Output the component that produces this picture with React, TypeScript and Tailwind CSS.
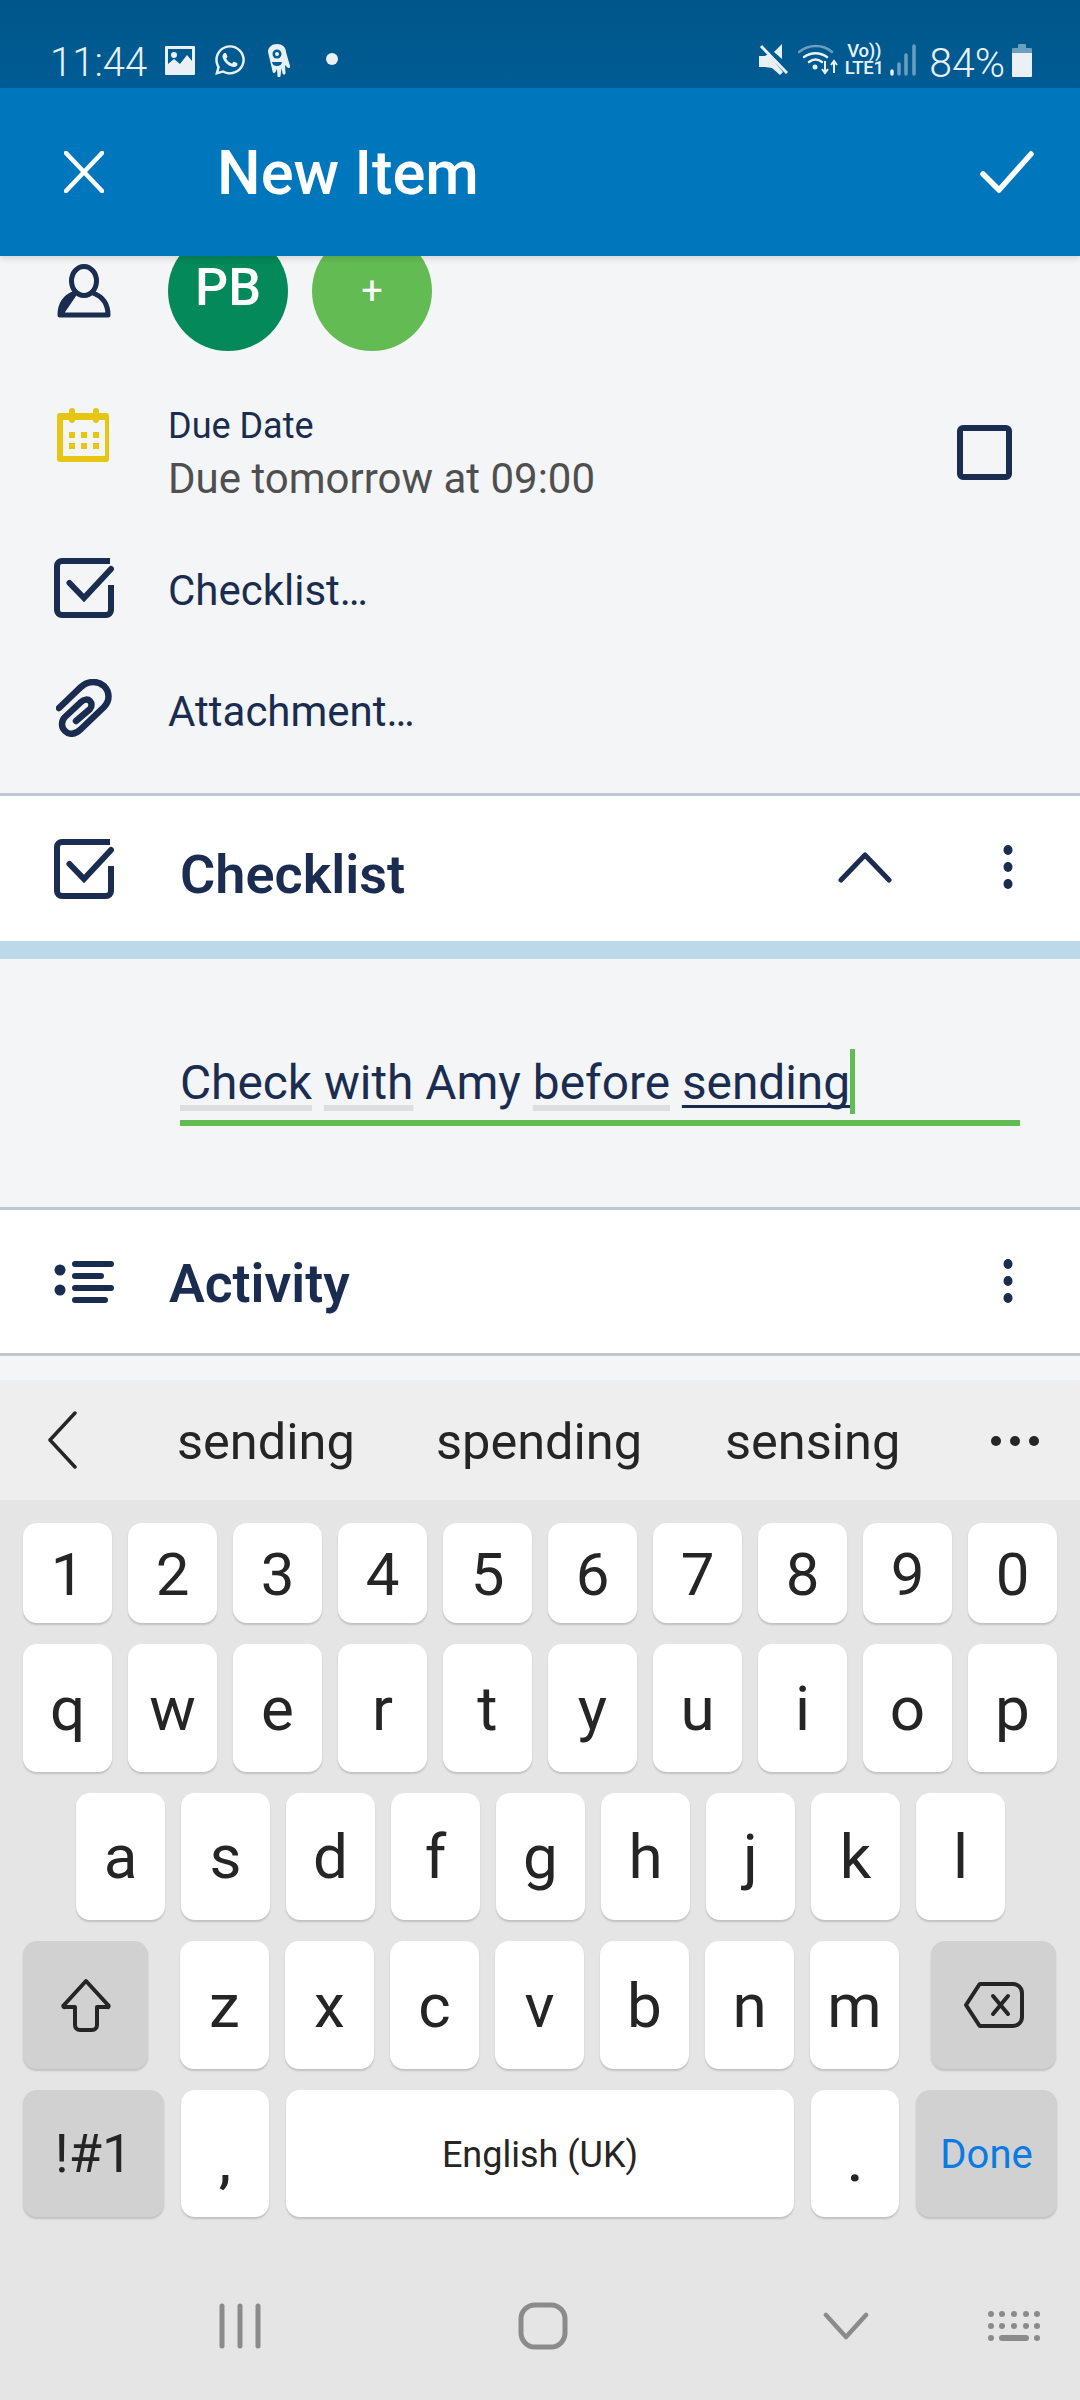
import { FaWhatsapp } from 'react-icons/fa';

const ROW_1 = ['1', '2', '3', '4', '5', '6', '7', '8', '9', '0'];
const ROW_2 = ['q', 'w', 'e', 'r', 't', 'y', 'u', 'i', 'o', 'p'];
const ROW_3 = ['a', 's', 'd', 'f', 'g', 'h', 'j', 'k', 'l'];
const ROW_4 = ['z', 'x', 'c', 'v', 'b', 'n', 'm'];

const NAVY = '#1a2d50';

const Key = ({ label, className = '' }: { label: React.ReactNode; className?: string }) => (
  <div
    className={`flex items-center justify-center rounded-[14px] bg-white shadow-[0_2px_2px_rgba(0,0,0,0.16)] ${className}`}
  >
    {label}
  </div>
);

const GrayKey = ({ label, className = '' }: { label: React.ReactNode; className?: string }) => (
  <div
    className={`flex items-center justify-center rounded-[14px] bg-[#d1d1d1] shadow-[0_2px_2px_rgba(0,0,0,0.16)] ${className}`}
  >
    {label}
  </div>
);

const CheckBoxIcon = () => (
  <svg width="60" height="60" viewBox="0 0 60 60" fill="none" stroke={NAVY} strokeWidth="6">
    <path d="M56 3H8a5 5 0 0 0-5 5v44a5 5 0 0 0 5 5h44a5 5 0 0 0 5-5V27" />
    <path d="M15.5 25 30 40 57 11" strokeLinecap="round" />
  </svg>
);

const Dots = () => (
  <svg width="12" height="46" viewBox="0 0 12 46" fill={NAVY}>
    <ellipse cx="6" cy="6" rx="4.5" ry="5" />
    <ellipse cx="6" cy="23" rx="4.5" ry="5" />
    <ellipse cx="6" cy="40" rx="4.5" ry="5" />
  </svg>
);

const StatusBar = () => (
  <div className="flex h-[88px] shrink-0 items-start bg-gradient-to-b from-[#00568a] to-[#005c94] pl-[50px] pt-[38px] text-[#e9f1f6]">
    <span className="mt-[2px] text-[40px] font-light leading-[46px]">11:44</span>
    <svg className="ml-[18px] mt-[8px]" width="30" height="29" viewBox="0 0 30 29">
      <path
        fill="#e9f1f6"
        fillRule="evenodd"
        d="M1 0h28a1 1 0 0 1 1 1v27a1 1 0 0 1-1 1H1a1 1 0 0 1-1-1V1a1 1 0 0 1 1-1Zm2 3v15l6-5 6 5 7-9 5 6V3H3Z"
      />
      <circle cx="9" cy="9" r="3" fill="#e9f1f6" />
    </svg>
    <FaWhatsapp className="ml-[18px] mt-[5px]" size={34} />
    <svg className="ml-[19px] mt-[6px]" width="25" height="33" viewBox="0 0 25 33">
      <path
        fill="#e9f1f6"
        d="M2 8c0-5 4-8 9-8s9 3 9 8l4 14c.4 2-2 3-3 1l-2-2 .5 8c0 2-3 2-3 0l-1-5-1 8c-.2 2-3 2-3 0l-.5-7-1.500 3c-1 2-3 1-3-1L2 8Z"
      />
      <circle cx="11" cy="10" r="4.500" fill="#005c94" />
      <circle cx="11" cy="10" r="2" fill="#e9f1f6" />
      <path fill="#005c94" d="M6 18h10c-.5 3-2.500 4-5 4s-4.500-1-5-4Z" />
    </svg>
    <span className="ml-[35px] mt-[15px] size-[12px] rounded-full bg-[#e9f1f6]" />

    <div className="ml-auto flex items-start pr-[48px]">
      <svg className="mt-[6px]" width="30" height="32" viewBox="0 0 30 32">
        <path fill="#e9f1f6" d="M0 12h6l3-2 15 18-3 3-8-7-7-1H0V12Zm15-4 8-8v15l-8-7Z" />
        <path stroke="#e9f1f6" strokeWidth="3" d="M2 2l26 27" />
        <path stroke="#005c94" strokeWidth="2" d="M5 1l25 26" />
      </svg>
      <svg className="ml-[9px] mt-[6px]" width="42" height="32" viewBox="0 0 42 32" fill="none">
        <path stroke="#6b9fc0" strokeWidth="2.500" strokeLinecap="round" d="M1 8c10-8 24-8 33 0" />
        <path stroke="#e9f1f6" strokeWidth="2.500" strokeLinecap="round" d="M6 13c7-5 16-5 23 0M11 18c4-3 9-3 13 0" />
        <circle cx="17" cy="23" r="2.500" fill="#e9f1f6" />
        <path stroke="#e9f1f6" strokeWidth="2" d="M27 17v12m-3-4 3 4 3-4M36 29V17m-3 4 3-4 3 4" />
      </svg>
      <p className="ml-[4px] mt-[5px] w-[40px] whitespace-nowrap text-center text-[18.500px] font-medium leading-[17px] tracking-[-0.3px] text-[#e9f1f6]">
        Vo))
        <br />
        LTE1
      </p>
      <svg className="ml-[5px] mt-[5px]" width="28" height="34" viewBox="0 0 28 34" strokeWidth="3.500" strokeLinecap="round">
        <path stroke="#e9f1f6" d="M3 28v3" />
        <path stroke="#6b9fc0" d="M10 21v10M17 12v19M25 3v28" />
      </svg>
      <span className="ml-[12px] mt-[2px] text-[41px] font-light leading-[46px]">84%</span>
      <svg className="ml-[7px] mt-[6px]" width="20" height="33" viewBox="0 0 20 33">
        <path fill="#6b9fc0" d="M6 1a1 1 0 0 1 1-1h6a1 1 0 0 1 1 1v3h5a1 1 0 0 1 1 1v5H0V5a1 1 0 0 1 1-1h5V1Z" />
        <path fill="#e9f1f6" d="M0 9h20v23a1 1 0 0 1-1 1H1a1 1 0 0 1-1-1V9Z" />
      </svg>
    </div>
  </div>
);

const Header = () => (
  <div className="relative z-10 flex h-[168px] shrink-0 items-center bg-[#0077bd] pl-[64px] pr-[46px] shadow-[0_3px_6px_rgba(0,0,0,0.12)]">
    <svg width="40" height="42" viewBox="0 0 40 42" stroke="#fff" strokeWidth="4.500" strokeLinecap="round">
      <path d="M2 2l36 38M38 2 2 40" />
    </svg>
    <h1 className="ml-[113px] mt-[4px] text-[61.500px] font-medium leading-none text-white">New Item</h1>
    <svg className="ml-auto" width="54" height="42" viewBox="0 0 54 42" fill="none" stroke="#fff" strokeWidth="5.500" strokeLinecap="round" strokeLinejoin="round">
      <path d="M3 23l16 16L51 3" />
    </svg>
  </div>
);

const Fields = () => (
  <div className="h-[540px] shrink-0 border-b-[3px] border-[#c0c8cf]">
    <div className="flex h-[95px] items-start pl-[57px]">
      <svg className="mt-[8px]" width="54" height="54" viewBox="0 0 54 54" fill="none" stroke={NAVY} strokeWidth="5">
        <ellipse cx="27" cy="17" rx="12.500" ry="14.500" />
        <path d="M3 51H51C51 38 44 32 36 29M18 29C10 32 3 38 3 51Z" strokeLinejoin="round" />
      </svg>
      <div className="-mt-[25px] ml-[57px] flex size-[120px] items-center justify-center rounded-full bg-[#04895a] pb-[6px] text-[52px] font-medium text-white">
        PB
      </div>
      <div className="-mt-[25px] ml-[24px] flex size-[120px] items-center justify-center rounded-full bg-[#63bc53] text-[38px] text-white">
        +
      </div>
    </div>

    <div className="mt-[57px] flex h-[100px] items-start pl-[57px]">
      <svg width="54" height="54" viewBox="0 0 54 54" fill="#e6c612">
        <path
          fillRule="evenodd"
          d="M5 5h7V3a3 3 0 0 1 6 0v2h18V3a3 3 0 0 1 6 0v2h7a3 3 0 0 1 3 3v43a3 3 0 0 1-3 3H3a3 3 0 0 1-3-3V8a3 3 0 0 1 3-3h2Zm1 7v36h42V12h-6a3 3 0 0 1-6 0H18a3 3 0 0 1-6 0H6Z"
        />
        <path d="M12 24h6v6h-6zM24 24h6v6h-6zM36 24h6v6h-6zM12 35h6v6h-6zM24 35h6v6h-6zM36 35h6v6h-6z" />
      </svg>
      <div className="-mt-[3px] ml-[57px] flex-1">
        <p className="text-[36px] leading-[42px] text-[#1a2d50]">Due Date</p>
        <p className="mt-[8px] text-[42px] leading-[48px] text-[#4f4f4f]">Due tomorrow at 09:00</p>
      </div>
      <div className="mr-[68px] mt-[17px] size-[55px] rounded-[6px] border-[6px] border-[#1a2d50]" />
    </div>

    <div className="mt-[50px] flex h-[60px] items-center pl-[54px]">
      <CheckBoxIcon />
      <span className="ml-[54px] mt-[5px] text-[42px] text-[#1a2d50]">Checklist…</span>
    </div>

    <div className="mt-[60px] flex h-[60px] items-center pl-[56px]">
      <svg width="57" height="58" viewBox="0 0 57 58" fill="none" stroke={NAVY} strokeWidth="6.500" strokeLinecap="round">
        <path d="M3 29 25 8c8-7 17-6 23-1 6 6 6 15 0 21L25 50c-6 6-12 6-16 2-4-4-4-10 0-14l16-15c3-3 7-3 9-1 2 2 2 6 0 8L20 42" />
      </svg>
      <span className="ml-[55px] mt-[6px] text-[42px] text-[#1a2d50]">Attachment…</span>
    </div>
  </div>
);

const ChecklistSection = () => (
  <>
    <div className="flex h-[145px] shrink-0 items-center bg-white pl-[54px] pr-[66px]">
      <CheckBoxIcon />
      <span className="ml-[66px] mt-[12px] text-[54px] font-semibold leading-none text-[#1a2d50]">Checklist</span>
      <svg className="ml-auto -mt-[4px] mr-[48px]" width="54" height="32" viewBox="0 0 54 32" fill="none" stroke={NAVY} strokeWidth="5" strokeLinecap="round" strokeLinejoin="round">
        <path d="M3 29 27 4l24 25" />
      </svg>
      <div className="ml-[62px] -mt-[3px]">
        <Dots />
      </div>
    </div>
    <div className="h-[18px] shrink-0 bg-[#bcd9e9]" />
    <div className="h-[251px] shrink-0 border-b-[3px] border-[#c0c8cf] pl-[180px] pr-[60px] pt-[91px]">
      <div className="h-[76px] border-b-[6px] border-[#63bc53] text-[47.800px] leading-[66px] text-[#1a2d50] [text-decoration-skip-ink:none]">
        <span className="relative">
          <span className="underline decoration-[#dedede] decoration-[6px] underline-offset-[6px]">Check</span>{' '}
          <span className="underline decoration-[#dedede] decoration-[6px] underline-offset-[6px]">with</span> Amy{' '}
          <span className="underline decoration-[#dedede] decoration-[6px] underline-offset-[6px]">before</span>{' '}
          <span className="underline decoration-[#1a2d50] decoration-[3px] underline-offset-[6px]">sending</span>
          <span className="absolute -right-[5px] -top-[6px] h-[65px] w-[5px] bg-[#63bc53]" />
        </span>
      </div>
    </div>
  </>
);

const ActivitySection = () => (
  <div className="flex h-[146px] shrink-0 items-center border-b-[3px] border-[#c0c8cf] bg-white pl-[54px] pr-[66px]">
    <svg width="60" height="44" viewBox="0 0 60 44" fill={NAVY} stroke={NAVY}>
      <circle cx="6" cy="10" r="5.500" stroke="none" />
      <circle cx="6" cy="30" r="5.500" stroke="none" />
      <path strokeWidth="6" strokeLinecap="round" d="M21 4h36M21 16h26M21 28h36M21 40h30" />
    </svg>
    <span className="ml-[55px] mt-[4px] text-[53.500px] font-semibold leading-none text-[#1a2d50]">Activity</span>
    <div className="ml-auto -mt-[1px]">
      <Dots />
    </div>
  </div>
);

const Suggestions = () => (
  <div className="flex h-[120px] shrink-0 items-center bg-[#eeeeee] pl-[47px] text-[50.500px] leading-none text-[#252525]">
    <svg width="30" height="58" viewBox="0 0 30 58" fill="none" stroke="#252525" strokeWidth="3.500" strokeLinecap="round" strokeLinejoin="round">
      <path d="M28 2 3 29l25 27" />
    </svg>
    <span className="ml-[100px] mt-[4px] w-[259px]">sending</span>
    <span className="mt-[4px] w-[289px]">spending</span>
    <span className="mt-[4px] w-[265px]">sensing</span>
    <svg className="mt-[2px]" width="50" height="12" viewBox="0 0 50 12" fill="#252525">
      <circle cx="6" cy="6" r="5" />
      <circle cx="25" cy="6" r="5" />
      <circle cx="44" cy="6" r="5" />
    </svg>
  </div>
);

const Keyboard = () => (
  <div className="flex flex-1 flex-col bg-[#e5e5e5] px-[23px] pt-[23px] text-[#252525]">
    <div className="flex h-[100px] gap-[16px] text-[60px]">
      {ROW_1.map((k) => (
        <Key key={k} label={k} className="w-[89px] pt-[4px]" />
      ))}
    </div>
    <div className="mt-[21px] flex h-[128px] gap-[16px] text-[62px]">
      {ROW_2.map((k) => (
        <Key key={k} label={k} className="w-[89px]" />
      ))}
    </div>
    <div className="ml-[53px] mt-[21px] flex h-[127px] gap-[16px] text-[62px]">
      {ROW_3.map((k) => (
        <Key key={k} label={k} className="w-[89px]" />
      ))}
    </div>
    <div className="mt-[21px] flex h-[128px] text-[62px]">
      <GrayKey
        className="w-[125px]"
        label={
          <svg width="50" height="54" viewBox="0 0 50 54" fill="none" stroke="#252525" strokeWidth="4" strokeLinejoin="round">
            <path d="M25 3 3 27a1 1 0 0 0 1 2h10v18c0 3 2 5 5 5h12c3 0 5-2 5-5V29h10a1 1 0 0 0 1-2L25 3Z" />
          </svg>
        }
      />
      <div className="ml-[32px] flex gap-[16px]">
        {ROW_4.map((k) => (
          <Key key={k} label={k} className="w-[89px]" />
        ))}
      </div>
      <GrayKey
        className="ml-[32px] w-[125px]"
        label={
          <svg width="60" height="46" viewBox="0 0 60 46" fill="none" stroke="#252525" strokeWidth="4" strokeLinejoin="round" strokeLinecap="round">
            <path d="M2 23 15 3a2 2 0 0 1 2-1h32c5 0 9 4 9 9v24c0 5-4 9-9 9H17a2 2 0 0 1-2-1L2 23Z" />
            <path d="M29 14l15 18M44 14 29 32" />
          </svg>
        }
      />
    </div>
    <div className="mt-[21px] flex h-[127px] gap-[17px]">
      <GrayKey label="!#1" className="w-[141px] text-[54px]" />
      <Key label={<span className="mt-[16px] text-[56px] font-medium">,</span>} className="w-[88px]" />
      <Key label="English (UK)" className="w-[508px] pt-[3px] text-[36px]" />
      <Key label={<span className="mt-[16px] text-[56px] font-medium">.</span>} className="w-[88px]" />
      <GrayKey label={<span className="pt-[3px] text-[#0a7be5]">Done</span>} className="w-[141px] text-[40px]" />
    </div>
    <div className="mt-[85px] flex items-center text-[#8b8b8b]">
      <svg className="ml-[196px]" width="42" height="46" viewBox="0 0 42 46" fill="none" stroke="#8b8b8b" strokeWidth="5" strokeLinecap="round">
        <path d="M3 3v40M21 3v40M39 3v40" />
      </svg>
      <svg className="ml-[257px]" width="50" height="48" viewBox="0 0 50 48" fill="none" stroke="#8b8b8b" strokeWidth="5">
        <rect x="3" y="3" width="44" height="42" rx="14" />
      </svg>
      <svg className="ml-[255px]" width="46" height="28" viewBox="0 0 46 28" fill="none" stroke="#8b8b8b" strokeWidth="4.500" strokeLinecap="round" strokeLinejoin="round">
        <path d="M3 3l20 22L43 3" />
      </svg>
      <svg className="ml-[118px]" width="54" height="32" viewBox="0 0 54 32" fill="#8b8b8b">
        <circle cx="4" cy="4" r="3" />
        <circle cx="15" cy="4" r="3" />
        <circle cx="27" cy="4" r="3" />
        <circle cx="39" cy="4" r="3" />
        <circle cx="50" cy="4" r="3" />
        <circle cx="4" cy="16" r="3" />
        <circle cx="15" cy="16" r="3" />
        <circle cx="27" cy="16" r="3" />
        <circle cx="39" cy="16" r="3" />
        <circle cx="50" cy="16" r="3" />
        <circle cx="4" cy="28" r="3" />
        <rect x="12" y="25" width="30" height="6" rx="3" />
        <circle cx="50" cy="28" r="3" />
      </svg>
    </div>
  </div>
);

export default function App() {
  return (
    <div className="flex h-[2400px] w-[1080px] flex-col overflow-hidden bg-[#f3f5f7] font-['Roboto',sans-serif]">
      <StatusBar />
      <Header />
      <Fields />
      <ChecklistSection />
      <ActivitySection />
      <div className="h-[24px] shrink-0" />
      <Suggestions />
      <Keyboard />
    </div>
  );
}
